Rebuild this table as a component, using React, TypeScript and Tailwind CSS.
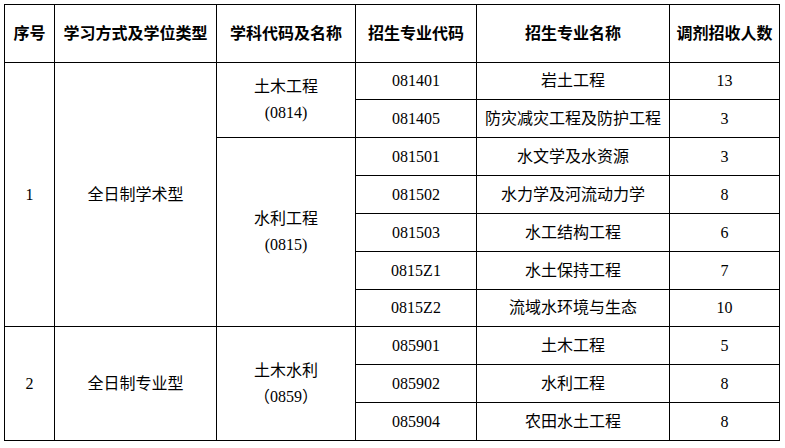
import React from "react";

const font = { fontFamily: '"Liberation Serif", "Noto Sans CJK SC", serif' };

const cell = "bg-white flex items-center justify-center text-center text-black text-[16px]";

const majors: [string, string, string][] = [
  ["081401", "岩土工程", "13"],
  ["081405", "防灾减灾工程及防护工程", "3"],
  ["081501", "水文学及水资源", "3"],
  ["081502", "水力学及河流动力学", "8"],
  ["081503", "水工结构工程", "6"],
  ["0815Z1", "水土保持工程", "7"],
  ["0815Z2", "流域水环境与生态", "10"],
  ["085901", "土木工程", "5"],
  ["085902", "水利工程", "8"],
  ["085904", "农田水土工程", "8"],
];

const rowStart = [
  "row-start-2",
  "row-start-3",
  "row-start-4",
  "row-start-5",
  "row-start-6",
  "row-start-7",
  "row-start-8",
  "row-start-9",
  "row-start-10",
  "row-start-11",
];

export default function App() {
  return (
    <div className="bg-white w-[785px] h-[448px] pt-[4px] pl-[4px]" style={font}>
      <div className="grid w-[776px] bg-black gap-px p-px grid-cols-[49px_161px_138px_120px_192px_109px] grid-rows-[57px_36px_37px_37px_37px_37px_37px_36px_37px_37px_37px]">
        <div className={`${cell} font-bold col-start-1 row-start-1`}>序号</div>
        <div className={`${cell} font-bold col-start-2 row-start-1`}>学习方式及学位类型</div>
        <div className={`${cell} font-bold col-start-3 row-start-1`}>学科代码及名称</div>
        <div className={`${cell} font-bold col-start-4 row-start-1`}>招生专业代码</div>
        <div className={`${cell} font-bold col-start-5 row-start-1`}>招生专业名称</div>
        <div className={`${cell} font-bold col-start-6 row-start-1`}>调剂招收人数</div>

        <div className={`${cell} col-start-1 row-start-2 row-span-7`}>1</div>
        <div className={`${cell} col-start-2 row-start-2 row-span-7`}>全日制学术型</div>
        <div className={`${cell} col-start-3 row-start-2 row-span-2 flex-col leading-[26px]`}>
          <span>土木工程</span>
          <span>(0814)</span>
        </div>
        <div className={`${cell} col-start-3 row-start-4 row-span-5 flex-col leading-[26px]`}>
          <span>水利工程</span>
          <span>(0815)</span>
        </div>

        <div className={`${cell} col-start-1 row-start-9 row-span-3`}>2</div>
        <div className={`${cell} col-start-2 row-start-9 row-span-3`}>全日制专业型</div>
        <div className={`${cell} col-start-3 row-start-9 row-span-3 flex-col leading-[26px]`}>
          <span>土木水利</span>
          <span className="flex items-center">
            <span className="inline-block w-[16px] text-right">（</span>
            <span>0859</span>
            <span className="inline-block w-[16px] text-left">）</span>
          </span>
        </div>

        {majors.map(([code, name, n], i) => (
          <React.Fragment key={code}>
            <div className={`${cell} col-start-4 ${rowStart[i]}`}>{code}</div>
            <div className={`${cell} col-start-5 ${rowStart[i]}`}>{name}</div>
            <div className={`${cell} col-start-6 ${rowStart[i]}`}>{n}</div>
          </React.Fragment>
        ))}
      </div>
    </div>
  );
}
